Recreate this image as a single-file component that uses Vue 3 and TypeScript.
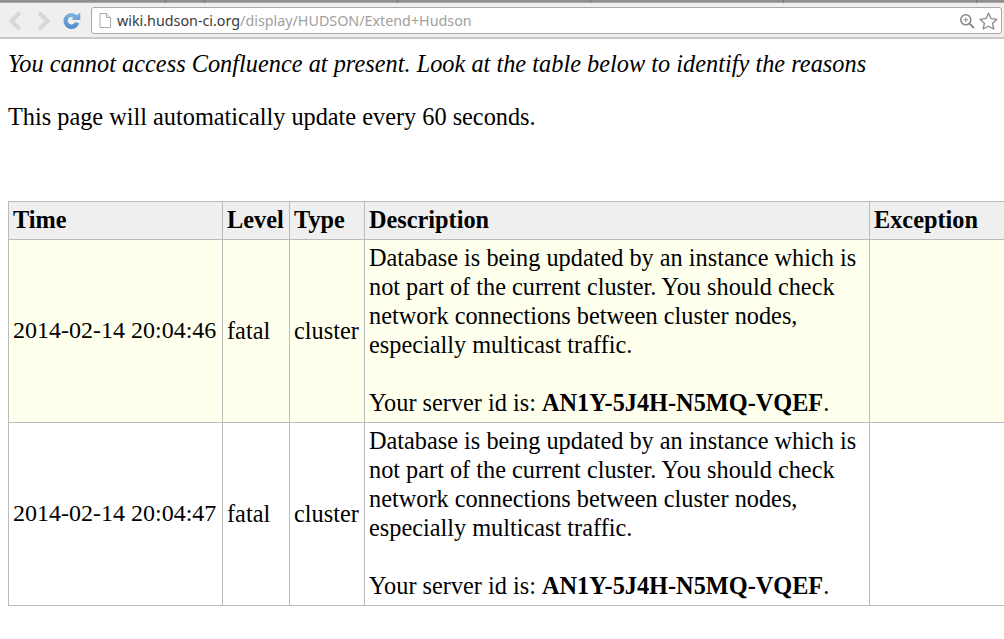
<template>
  <div class="page">
    <!-- browser toolbar -->
    <div class="tabstrip"></div>
    <div class="toolbar">
      <svg class="nav" width="16" height="20" viewBox="0 0 16 20">
        <path d="M11.5 3 L4.5 10 L11.5 17" fill="none" stroke="#d8d8d6" stroke-width="4.4" stroke-linejoin="round" stroke-linecap="round" />
      </svg>
      <svg class="nav nav-fwd" width="16" height="20" viewBox="0 0 16 20">
        <path d="M4.5 3 L11.5 10 L4.5 17" fill="none" stroke="#d8d8d6" stroke-width="4.4" stroke-linejoin="round" stroke-linecap="round" />
      </svg>
      <svg class="reload" width="18" height="18" viewBox="0 0 18 18">
        <defs>
          <linearGradient id="reload-fill" x1="0" y1="0" x2="0" y2="1">
            <stop offset="0" stop-color="#82b4e2" />
            <stop offset="1" stop-color="#4b8ccb" />
          </linearGradient>
        </defs>
        <path d="M8 1 A8 8 0 1 0 16.2 11 L11.8 10.2 A3.7 3.7 0 1 1 10.5 5.6 L8.6 7.8 L17.4 8 L17.2 .6 L13.6 3.2 A8 8 0 0 0 8 1 Z" fill="url(#reload-fill)" />
      </svg>
      <div class="omnibox">
        <svg class="page-icon" width="12" height="15" viewBox="0 0 12 15">
          <path d="M1 .5 H7.5 L11.5 4.5 V14.5 H1 Z" fill="#fff" stroke="#a8a8a8" />
          <path d="M7.5 .5 V4.5 H11.5" fill="#eee" stroke="#a8a8a8" />
        </svg>
        <span class="url"><span class="host">wiki.hudson-ci.org</span>/display/HUDSON/Extend+Hudson</span>
        <svg class="zoom-icon" width="16" height="16" viewBox="0 0 16 16">
          <circle cx="6.8" cy="6.8" r="5" fill="none" stroke="#8a8a8a" stroke-width="1.6" />
          <path d="M10.6 10.6 L15 15" stroke="#8a8a8a" stroke-width="2" />
          <path d="M4.5 6.8 H9 M6.8 4.5 V9" stroke="#8a8a8a" stroke-width="1" />
        </svg>
        <svg class="star" width="19" height="18" viewBox="0 0 19 18">
          <path d="M9.5 1.2 L12 6.6 L18 7.3 L13.6 11.3 L14.8 17 L9.5 14.2 L4.2 17 L5.4 11.3 L1 7.3 L7 6.6 Z" fill="none" stroke="#8a8a8a" stroke-width="1.3" stroke-linejoin="round" />
        </svg>
      </div>
    </div>

    <div class="content">
      <p class="notice"><i>You cannot access Confluence at present. Look at the table below to identify the reasons</i></p>
      <p>This page will automatically update every 60 seconds.</p>
      <table>
        <thead>
          <tr>
            <th class="c-time">Time</th>
            <th class="c-level">Level</th>
            <th class="c-type">Type</th>
            <th class="c-desc">Description</th>
            <th class="c-exc">Exception</th>
          </tr>
        </thead>
        <tbody>
          <tr v-for="row in rows" :key="row.time" :class="{ fatal: row.highlight }">
            <td class="when">{{ row.time }}</td>
            <td>fatal</td>
            <td>cluster</td>
            <td>
              {{ message }}<br /><br />Your server id is: <b>{{ serverId }}</b>.
            </td>
            <td></td>
          </tr>
        </tbody>
      </table>
    </div>
  </div>
</template>

<script setup lang="ts">
const message =
  "Database is being updated by an instance which is not part of the current cluster. You should check network connections between cluster nodes, especially multicast traffic.";
const serverId = "AN1Y-5J4H-N5MQ-VQEF";

const rows = [
  { time: "2014-02-14 20:04:46", highlight: true },
  { time: "2014-02-14 20:04:47", highlight: false },
];
</script>

<style>
html,
body {
  overflow: hidden;
  background: #fff;
}
</style>

<style scoped>
.page {
  width: 1004px;
  height: 639px;
  overflow: hidden;
  font-family: "Liberation Serif", serif;
  font-size: 24.3px;
  color: #000;
}

/* bottom edge of the tab row, with the notches between tabs */
.tabstrip {
  height: 3px;
  background:
    repeating-linear-gradient(90deg, #777775 0 1px, transparent 1px 193px) 204px 0,
    linear-gradient(#8e8e8c 0 2px, #a8a8a6 2px);
}

.toolbar {
  height: 33px;
  padding: 1px 2px 0 7px;
  display: flex;
  align-items: center;
  background: #f0efed;
  border-bottom: 2px solid #c8c8c6;
}

.nav {
  margin-right: 13px;
}

.nav-fwd {
  margin-right: 11px;
}

.reload {
  margin-right: 10px;
}

.omnibox {
  flex: 1;
  height: 27px;
  display: flex;
  align-items: center;
  padding: 0 3px 0 7px;
  background: #fff;
  border: 1px solid #a9a9a7;
  border-radius: 3px;
  box-sizing: border-box;
}

.page-icon {
  margin-right: 6px;
}

.url {
  flex: 1;
  font-family: "Noto Sans", sans-serif;
  font-size: 14.3px;
  color: #a0a0a0;
}

.host {
  color: #3a3a3a;
}

.zoom-icon {
  margin-right: 4px;
}

.content {
  padding: 0 8px;
}

p {
  margin: 24px 0 0;
  line-height: 29px;
}

.notice {
  margin-top: 10px;
  letter-spacing: 0.02px;
}

table {
  margin-top: 70px;
  width: 1100px;
  table-layout: fixed;
  border-collapse: collapse;
  line-height: 29px;
}

th,
td {
  border: 1px solid #bbb;
  padding: 3px 4px 5px;
  text-align: left;
}

th {
  background: #efefef;
}

.when {
  white-space: nowrap;
  font-size: 24px;
}

.c-time {
  width: 205px;
}

.c-level {
  width: 58px;
}

.c-type {
  width: 66px;
}

.c-desc {
  width: 496px;
}

tr.fatal td {
  background: #ffffee;
}
</style>
